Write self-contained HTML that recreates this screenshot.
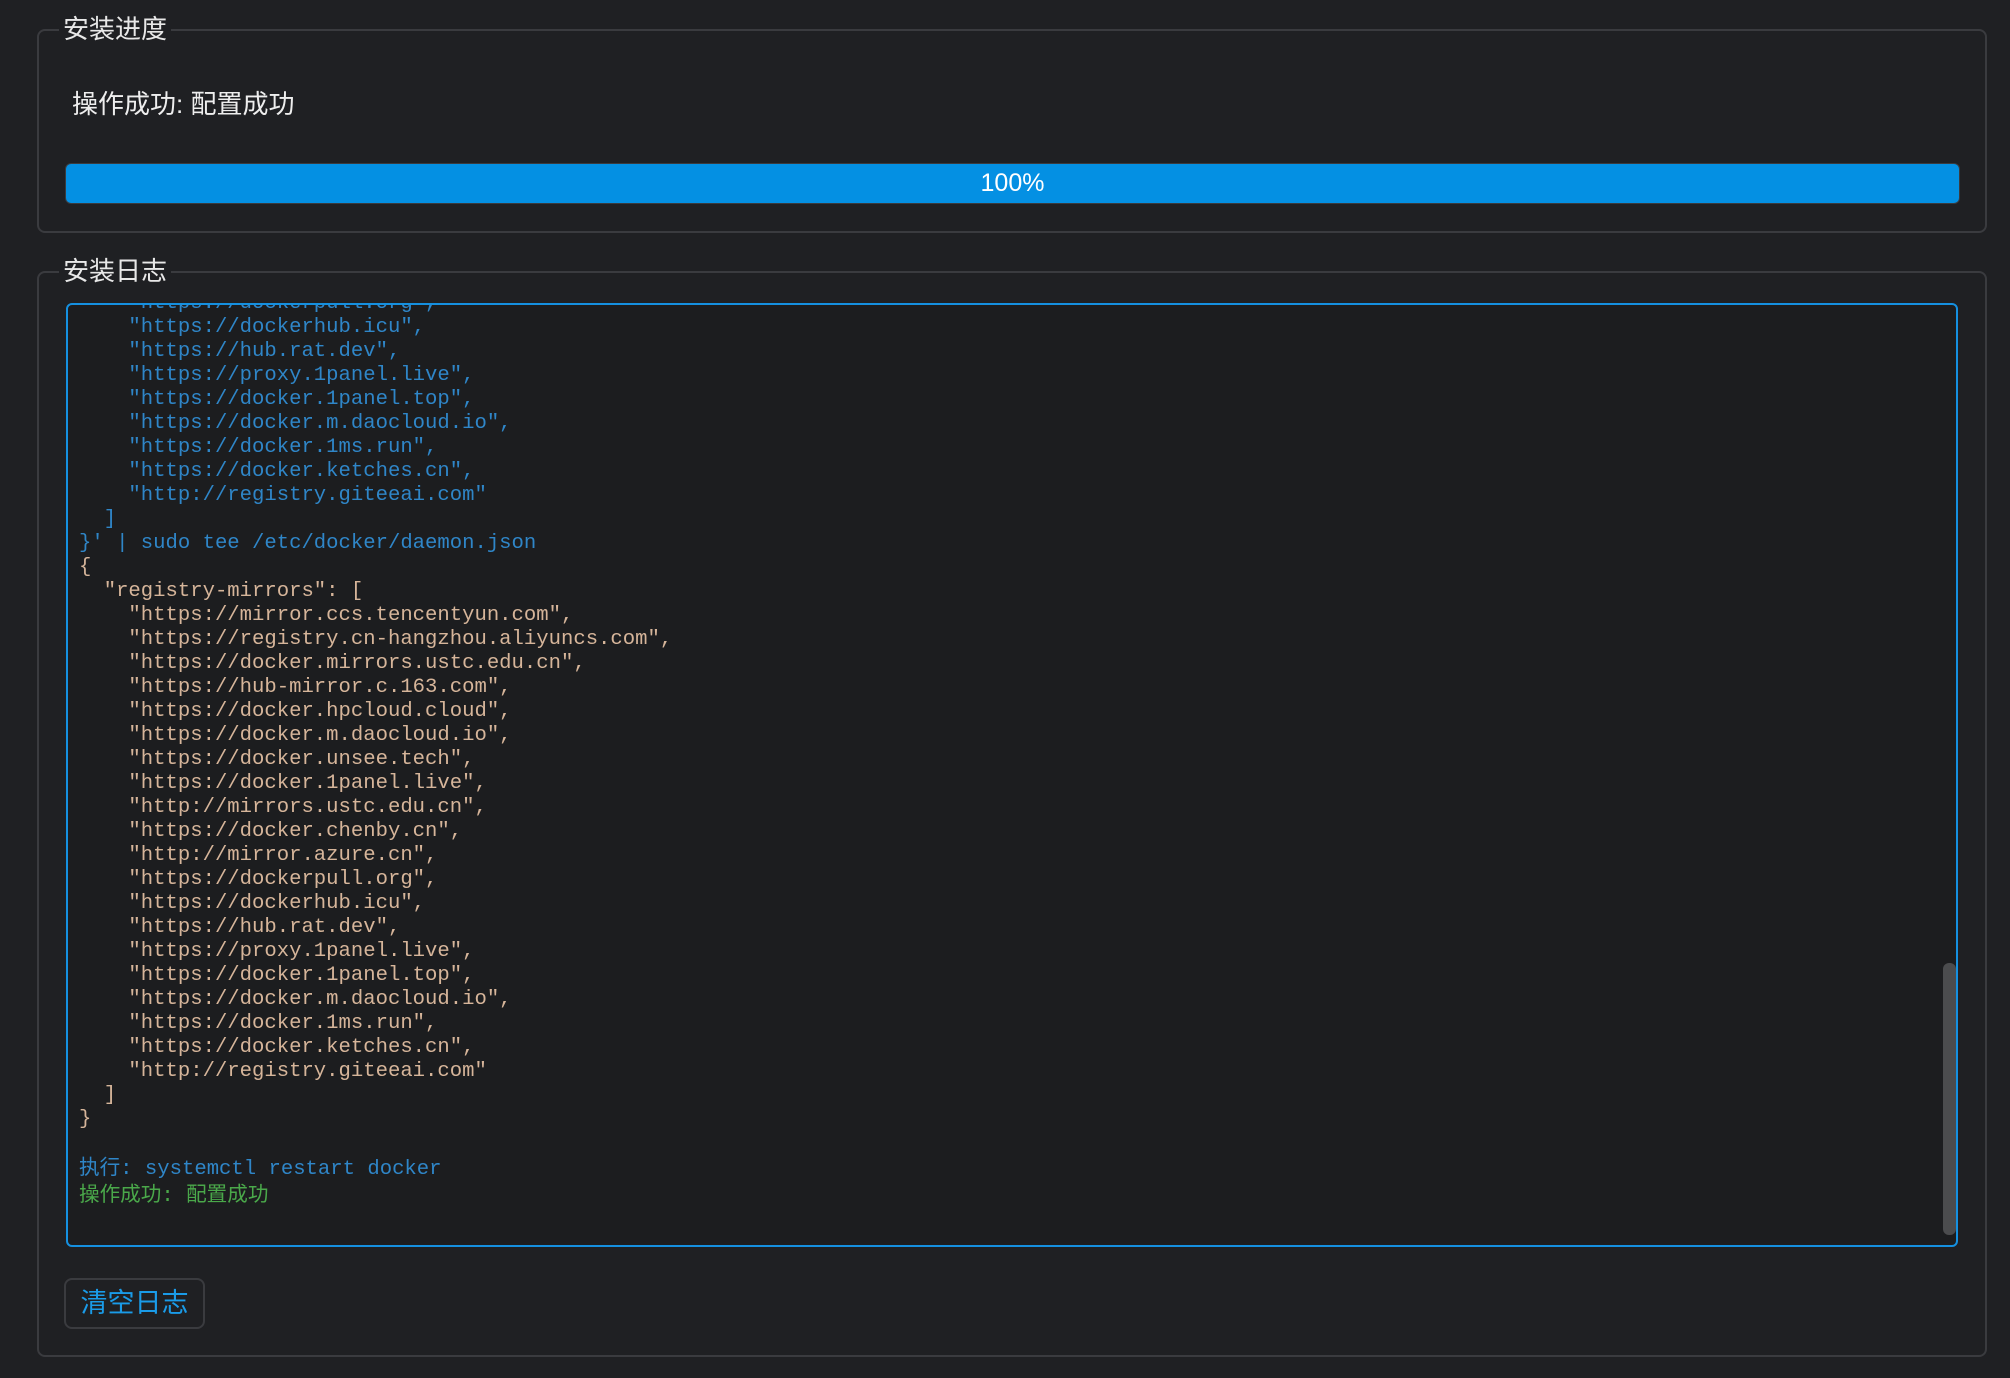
<!DOCTYPE html>
<html><head><meta charset="utf-8"><style>
*{margin:0;padding:0;box-sizing:border-box}
body{width:2010px;height:1378px;background:#1f2023;overflow:hidden;font-family:"Liberation Sans","Noto Sans CJK SC",sans-serif;color:#e6e6e6;position:relative}
.fs{position:absolute;border:2px solid #3a3b3f;border-radius:8px}
.lg{position:absolute;top:-20px;left:20px;background:#1f2023;padding:0 4px;font-size:26px;line-height:36px;color:#e8e8e8}
.bar{position:absolute;left:65px;top:163px;width:1895px;height:41px;background:#0490e3;border-radius:6px;border:1px solid #3a3b3f;color:#fff;font-size:25px;line-height:39px;text-align:center}
.log{position:absolute;left:66px;top:303px;width:1892px;height:944px;border:2px solid #1590e0;border-radius:6px;background:#1c1d1f;overflow:hidden}
.in{position:absolute;left:11px;top:-13px;font-family:"Liberation Mono","Noto Sans CJK SC",monospace;font-size:20.6px;line-height:24px;white-space:pre}
.b{color:#2f86c8}.o{color:#d6b59a}.g{color:#4aa84a}
.thumb{position:absolute;left:1875px;top:658px;width:13px;height:272px;background:#4b4c4e;border-radius:6px}
.btn{position:absolute;left:64px;top:1278px;width:141px;height:51px;border:2px solid #3a3b3f;border-radius:8px;color:#1a9be8;font-size:27px;line-height:47px;text-align:center}
</style></head><body>
<div class="fs" style="left:37px;top:29px;width:1950px;height:204px"><div class="lg">安装进度</div></div>
<div style="position:absolute;left:72px;top:86px;font-size:26px;line-height:36px;color:#eee">操作成功: 配置成功</div>
<div class="bar">100%</div>
<div class="fs" style="left:37px;top:271px;width:1950px;height:1086px"><div class="lg">安装日志</div></div>
<div class="log"><div class="in"><span class="b">    "https://dockerpull.org",
    "https://dockerhub.icu",
    "https://hub.rat.dev",
    "https://proxy.1panel.live",
    "https://docker.1panel.top",
    "https://docker.m.daocloud.io",
    "https://docker.1ms.run",
    "https://docker.ketches.cn",
    "http://registry.giteeai.com"
  ]
}' | sudo tee /etc/docker/daemon.json</span>
<span class="o">{
  "registry-mirrors": [
    "https://mirror.ccs.tencentyun.com",
    "https://registry.cn-hangzhou.aliyuncs.com",
    "https://docker.mirrors.ustc.edu.cn",
    "https://hub-mirror.c.163.com",
    "https://docker.hpcloud.cloud",
    "https://docker.m.daocloud.io",
    "https://docker.unsee.tech",
    "https://docker.1panel.live",
    "http://mirrors.ustc.edu.cn",
    "https://docker.chenby.cn",
    "http://mirror.azure.cn",
    "https://dockerpull.org",
    "https://dockerhub.icu",
    "https://hub.rat.dev",
    "https://proxy.1panel.live",
    "https://docker.1panel.top",
    "https://docker.m.daocloud.io",
    "https://docker.1ms.run",
    "https://docker.ketches.cn",
    "http://registry.giteeai.com"
  ]
}</span></div>
<div class="in" style="top:851px;line-height:27px"><span class="b">执行: systemctl restart docker</span>
<span class="g">操作成功: 配置成功</span></div>
<div class="thumb"></div></div>
<div class="btn">清空日志</div>
</body></html>
